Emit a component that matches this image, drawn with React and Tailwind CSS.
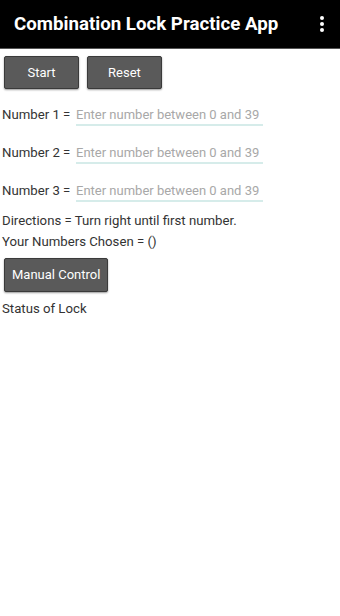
import React, { useState } from "react";

const font = { fontFamily: "Roboto, 'Noto Sans', sans-serif" };

function Btn({ children, className = "" }) {
  return (
    <button
      className={
        "h-[33px] bg-[#5a5a5a] border border-[#3a3a3a] rounded-[2px] text-white text-[13px] shadow-[0_1px_2px_rgba(0,0,0,0.4)] " +
        className
      }
    >
      {children}
    </button>
  );
}

function NumberRow({ n, value, onChange }) {
  return (
    <div className="h-[38px] flex items-center pl-[2px]">
      <span className="text-[13.2px] text-[#333] w-[74px] whitespace-nowrap">Number {n} =</span>
      <input
        value={value}
        onChange={e => onChange(e.target.value)}
        placeholder="Enter number between 0 and 39"
        className="w-[187px] h-[22px] text-[13px] text-[#333] placeholder:text-[#a8a8a8] border-b-2 border-[#d6ecea] outline-none bg-transparent"
      />
    </div>
  );
}

export default function App() {
  const [nums, setNums] = useState(["", "", ""]);

  const setNum = (i, v) => {
    const next = [...nums];
    next[i] = v;
    setNums(next);
  };

  return (
    <div className="w-[340px] min-h-[616px] bg-white" style={font}>
      <div className="h-[49px] bg-black border-b border-[#555] flex items-center justify-between pl-[14px] pr-[16px]">
        <h1 className="text-white text-[18.7px] font-bold">Combination Lock Practice App</h1>
        <div className="flex flex-col gap-[2px]">
          <span className="w-[4px] h-[4px] rounded-full bg-white" />
          <span className="w-[4px] h-[4px] rounded-full bg-white" />
          <span className="w-[4px] h-[4px] rounded-full bg-white" />
        </div>
      </div>

      <div className="flex gap-[8px] pl-[4px] pt-[7px]">
        <Btn className="w-[75px]">Start</Btn>
        <Btn className="w-[75px]">Reset</Btn>
      </div>

      <div className="mt-[7px]">
        {nums.map((v, i) => (
          <NumberRow key={i} n={i + 1} value={v} onChange={val => setNum(i, val)} />
        ))}
      </div>

      <div className="pl-[2px] text-[13.2px] text-[#333] leading-[21px]">
        <p>Directions = Turn right until first number.</p>
        <p>Your Numbers Chosen = ()</p>
      </div>

      <div className="pl-[4px] mt-[6px]">
        <Btn className="h-[34px] px-[7px]">Manual Control</Btn>
      </div>

      <p className="pl-[2px] mt-[7px] text-[13.2px] text-[#333] leading-[20px]">Status of Lock</p>
    </div>
  );
}
